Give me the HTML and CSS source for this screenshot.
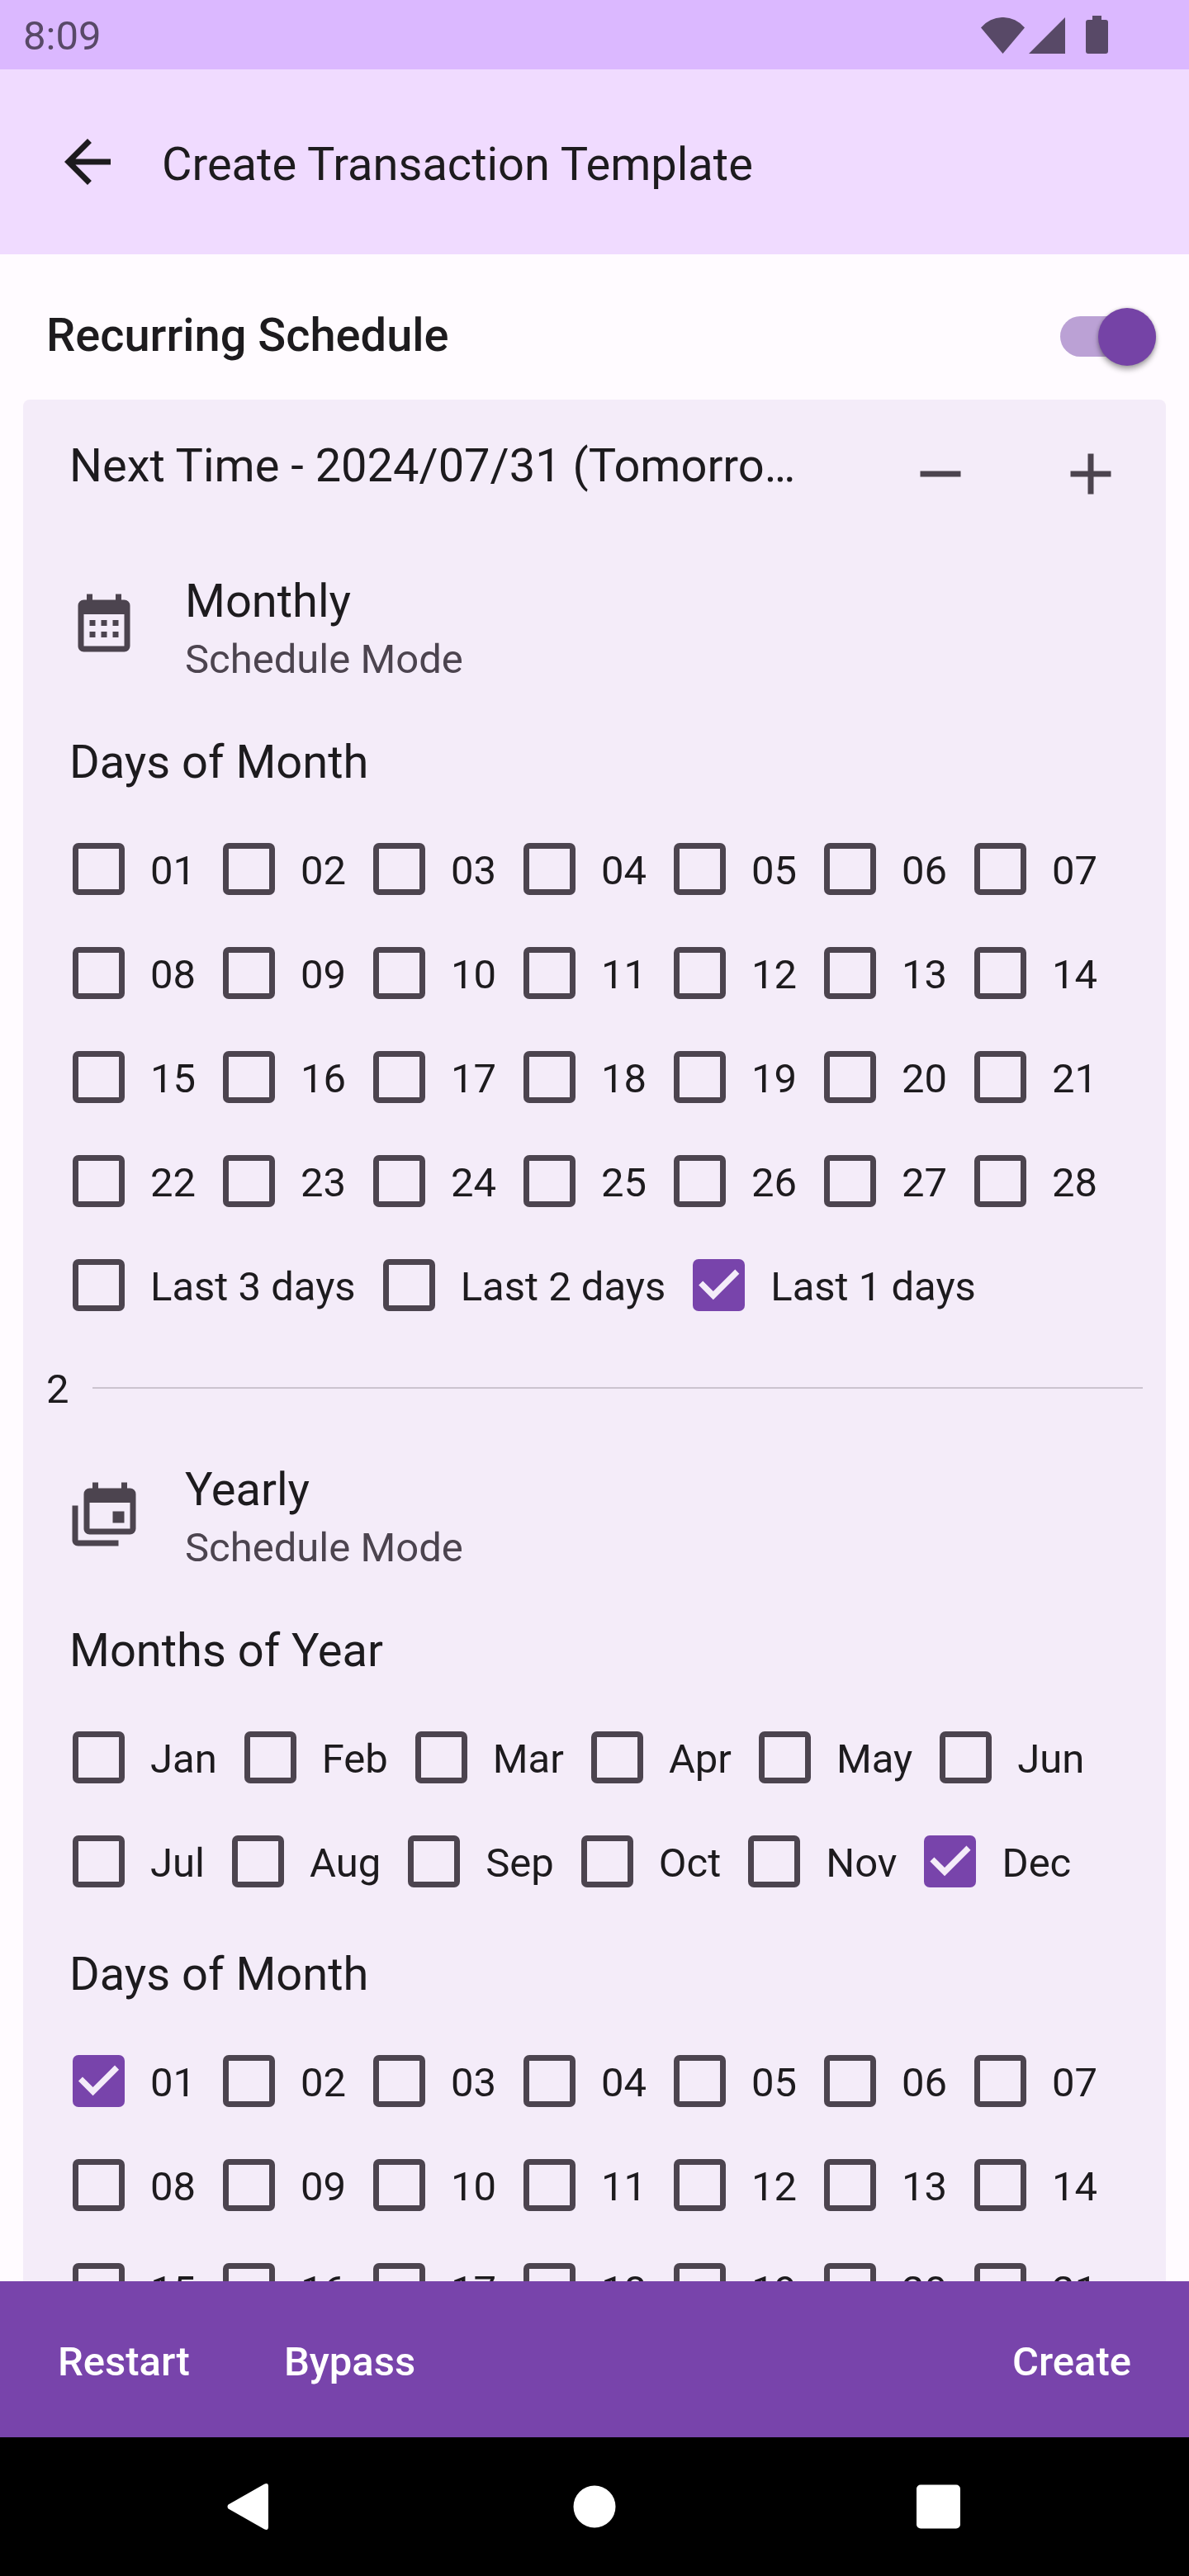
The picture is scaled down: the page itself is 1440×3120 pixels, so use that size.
FILE: index.html
```html
<!DOCTYPE html>
<html lang="en">
<head>
<meta charset="utf-8">
<meta name="viewport" content="width=device-width, initial-scale=1">
<title>Create Transaction Template</title>
<link rel="stylesheet" href="styles.css">
</head>
<body>
<div class="status-bar">
  <time class="clock">8:09</time>
  <div class="status-icons">
    <svg class="icon-wifi" viewBox="0 0 53 44" aria-hidden="true"><path d="M26.5 44 0 12.5A34.3 34.3 0 0 1 53 12.5Z"/></svg>
    <svg class="icon-signal" viewBox="0 0 44 44" aria-hidden="true"><path d="M0 44 44 0V44Z"/></svg>
    <svg class="icon-battery" viewBox="0 0 27 46" aria-hidden="true"><path d="M8 0H19V5H24A3 3 0 0 1 27 8V43A3 3 0 0 1 24 46H3A3 3 0 0 1 0 43V8A3 3 0 0 1 3 5H8Z"/></svg>
  </div>
</div>
<header class="app-bar">
  <button class="icon-button" type="button" aria-label="Back">
    <svg class="icon" viewBox="0 0 24 24" aria-hidden="true"><path d="M20 11H7.83l5.59-5.59L12 4l-8 8 8 8 1.41-1.41L7.83 13H20v-2z"/></svg>
  </button>
  <h1 class="title">Create Transaction Template</h1>
</header>
<main class="content">
  <div class="recurring">
    <label class="recurring-label" for="recurring">Recurring Schedule</label>
    <input class="switch" id="recurring" type="checkbox" role="switch" checked>
  </div>
  <section class="card">
    <div class="next">
      <p class="next-text">Next Time - 2024/07/31 (Tomorrow)</p>
      <div class="stepper">
        <button class="step-button" type="button" aria-label="Fewer"><svg class="icon" viewBox="0 0 24 24" aria-hidden="true"><path d="M19 13H5v-2h14z"/></svg></button>
        <button class="step-button" type="button" aria-label="More"><svg class="icon" viewBox="0 0 24 24" aria-hidden="true"><path d="M19 13h-6v6h-2v-6H5v-2h6V5h2v6h6z"/></svg></button>
      </div>
    </div>

    <div class="mode">
      <svg class="icon mode-icon" viewBox="0 0 24 24" aria-hidden="true"><path d="M9,10V12H7V10H9M13,10V12H11V10H13M17,10V12H15V10H17M19,3A2,2 0 0,1 21,5V19A2,2 0 0,1 19,21H5C3.89,21 3,20.1 3,19V5A2,2 0 0,1 5,3H6V1H8V3H16V1H18V3H19M19,19V8H5V19H19M9,14V16H7V14H9M13,14V16H11V14H13M17,14V16H15V14H17Z"/></svg>
      <div>
        <p class="mode-name">Monthly</p>
        <p class="mode-hint">Schedule Mode</p>
      </div>
    </div>
    <h2 class="group-title">Days of Month</h2>
    <div class="options">
      <div class="days">
        <label class="option"><input type="checkbox"><span>01</span></label>
        <label class="option"><input type="checkbox"><span>02</span></label>
        <label class="option"><input type="checkbox"><span>03</span></label>
        <label class="option"><input type="checkbox"><span>04</span></label>
        <label class="option"><input type="checkbox"><span>05</span></label>
        <label class="option"><input type="checkbox"><span>06</span></label>
        <label class="option"><input type="checkbox"><span>07</span></label>
        <label class="option"><input type="checkbox"><span>08</span></label>
        <label class="option"><input type="checkbox"><span>09</span></label>
        <label class="option"><input type="checkbox"><span>10</span></label>
        <label class="option"><input type="checkbox"><span>11</span></label>
        <label class="option"><input type="checkbox"><span>12</span></label>
        <label class="option"><input type="checkbox"><span>13</span></label>
        <label class="option"><input type="checkbox"><span>14</span></label>
        <label class="option"><input type="checkbox"><span>15</span></label>
        <label class="option"><input type="checkbox"><span>16</span></label>
        <label class="option"><input type="checkbox"><span>17</span></label>
        <label class="option"><input type="checkbox"><span>18</span></label>
        <label class="option"><input type="checkbox"><span>19</span></label>
        <label class="option"><input type="checkbox"><span>20</span></label>
        <label class="option"><input type="checkbox"><span>21</span></label>
        <label class="option"><input type="checkbox"><span>22</span></label>
        <label class="option"><input type="checkbox"><span>23</span></label>
        <label class="option"><input type="checkbox"><span>24</span></label>
        <label class="option"><input type="checkbox"><span>25</span></label>
        <label class="option"><input type="checkbox"><span>26</span></label>
        <label class="option"><input type="checkbox"><span>27</span></label>
        <label class="option"><input type="checkbox"><span>28</span></label>
      </div>
      <div class="wrap">
        <label class="option"><input type="checkbox"><span>Last 3 days</span></label>
        <label class="option"><input type="checkbox"><span>Last 2 days</span></label>
        <label class="option"><input type="checkbox" checked><span>Last 1 days</span></label>
      </div>
    </div>

    <div class="divider"><span>2</span><hr class="rule"></div>

    <div class="mode">
      <svg class="icon mode-icon" viewBox="0 0 24 24" aria-hidden="true"><path d="M21,17V8H7V17H21M21,3A2,2 0 0,1 23,5V17A2,2 0 0,1 21,19H7C5.89,19 5,18.1 5,17V5A2,2 0 0,1 7,3H8V1H10V3H18V1H20V3H21M3,21H17V23H3C1.89,23 1,22.1 1,21V9H3V21M19,15H15V11H19V15Z"/></svg>
      <div>
        <p class="mode-name">Yearly</p>
        <p class="mode-hint">Schedule Mode</p>
      </div>
    </div>
    <h2 class="group-title">Months of Year</h2>
    <div class="options">
      <div class="wrap">
        <label class="option"><input type="checkbox"><span>Jan</span></label>
        <label class="option"><input type="checkbox"><span>Feb</span></label>
        <label class="option"><input type="checkbox"><span>Mar</span></label>
        <label class="option"><input type="checkbox"><span>Apr</span></label>
        <label class="option"><input type="checkbox"><span>May</span></label>
        <label class="option"><input type="checkbox"><span>Jun</span></label>
        <label class="option"><input type="checkbox"><span>Jul</span></label>
        <label class="option"><input type="checkbox"><span>Aug</span></label>
        <label class="option"><input type="checkbox"><span>Sep</span></label>
        <label class="option"><input type="checkbox"><span>Oct</span></label>
        <label class="option"><input type="checkbox"><span>Nov</span></label>
        <label class="option"><input type="checkbox" checked><span>Dec</span></label>
      </div>
    </div>
    <h2 class="group-title group-title-next">Days of Month</h2>
    <div class="options">
      <div class="days">
        <label class="option"><input type="checkbox" checked><span>01</span></label>
        <label class="option"><input type="checkbox"><span>02</span></label>
        <label class="option"><input type="checkbox"><span>03</span></label>
        <label class="option"><input type="checkbox"><span>04</span></label>
        <label class="option"><input type="checkbox"><span>05</span></label>
        <label class="option"><input type="checkbox"><span>06</span></label>
        <label class="option"><input type="checkbox"><span>07</span></label>
        <label class="option"><input type="checkbox"><span>08</span></label>
        <label class="option"><input type="checkbox"><span>09</span></label>
        <label class="option"><input type="checkbox"><span>10</span></label>
        <label class="option"><input type="checkbox"><span>11</span></label>
        <label class="option"><input type="checkbox"><span>12</span></label>
        <label class="option"><input type="checkbox"><span>13</span></label>
        <label class="option"><input type="checkbox"><span>14</span></label>
        <label class="option"><input type="checkbox"><span>15</span></label>
        <label class="option"><input type="checkbox"><span>16</span></label>
        <label class="option"><input type="checkbox"><span>17</span></label>
        <label class="option"><input type="checkbox"><span>18</span></label>
        <label class="option"><input type="checkbox"><span>19</span></label>
        <label class="option"><input type="checkbox"><span>20</span></label>
        <label class="option"><input type="checkbox"><span>21</span></label>
      </div>
    </div>
  </section>
</main>
<footer class="actions">
  <button class="action" type="button">Restart</button>
  <button class="action" type="button">Bypass</button>
  <button class="action action-end" type="button">Create</button>
</footer>
<nav class="system-nav">
  <button class="nav-button" type="button" aria-label="System back"><svg class="nav-icon" viewBox="0 0 60 60" aria-hidden="true"><path d="M3.500 27.500 47 2.800Q52 .5 52 5.500V54.500Q52 59.500 47 57.200L3.500 32.500Q1.500 30 3.500 27.500Z"/></svg></button>
  <button class="nav-button" type="button" aria-label="Home"><svg class="nav-icon" viewBox="0 0 60 60" aria-hidden="true"><circle cx="30" cy="30" r="25.500"/></svg></button>
  <button class="nav-button" type="button" aria-label="Overview"><svg class="nav-icon" viewBox="0 0 60 60" aria-hidden="true"><rect x="3" y="3.500" width="53" height="53" rx="5"/></svg></button>
</nav>
</body>
</html>
```
FILE: styles.css
```css
:root {
  --primary: #7844ab;
  --ink: #1d1b1e;
  --muted: #4c444f;
  --surface: #fffbff;
  --card: #f4ecf9;
  --large: 56px;
  --medium: 49px;
}

* {
  box-sizing: border-box;
}

body {
  display: flex;
  flex-direction: column;
  height: 100vh;
  margin: 0;
  background: var(--surface);
  color: var(--ink);
  font-family: Roboto, "Liberation Sans", sans-serif;
  font-size: var(--medium);
}

h1, h2, p {
  margin: 0;
  font-size: var(--large);
  font-weight: 400;
  line-height: 72px;
}

button {
  padding: 0;
  border: 0;
  background: none;
  color: inherit;
  font: inherit;
}

.icon {
  display: block;
  flex: none;
  width: 84px;
  height: 84px;
  fill: currentColor;
}

.status-bar {
  display: flex;
  flex: none;
  align-items: center;
  justify-content: space-between;
  height: 84px;
  padding: 3px 98px 0 28px;
  background: #dbb8ff;
  color: #584967;
}

.status-icons {
  display: flex;
  align-items: flex-end;
  gap: 5px;
  padding-bottom: 4px;
}

.status-icons svg {
  display: block;
  fill: currentColor;
}

.icon-wifi {
  width: 53px;
  height: 44px;
}

.icon-signal {
  width: 44px;
  height: 44px;
}

.icon-battery {
  width: 27px;
  height: 46px;
  margin-left: 20px;
}

.app-bar {
  display: flex;
  flex: none;
  align-items: center;
  gap: 48px;
  height: 224px;
  padding: 0 64px;
  background: #f0dbff;
}

.title {
  padding-top: 6px;
}

.content {
  flex: 1;
  min-height: 0;
  overflow-y: auto;
  scrollbar-width: none;
}

.recurring {
  display: flex;
  align-items: flex-start;
  justify-content: space-between;
  padding: 65px 40px 41px 56px;
}

.recurring-label {
  font-size: var(--large);
  font-weight: 500;
  line-height: 66px;
}

.switch {
  display: grid;
  align-content: center;
  justify-content: end;
  width: 116px;
  height: 49px;
  margin: 10px 0 11px;
  border-radius: 25px;
  background: #bba1d5;
  appearance: none;
}

.switch::before {
  content: "";
  width: 70px;
  height: 70px;
  border-radius: 50%;
  background: #7543a6;
  box-shadow: 0 5px 6px rgb(0 0 0 / 30%), 0 0 4px rgb(0 0 0 / 20%);
}

.card {
  margin: 0 28px;
  padding-top: 6px;
  border-radius: 8px 8px 0 0;
  background: var(--card);
}

.next {
  display: flex;
  align-items: flex-start;
  gap: 76px;
  padding: 0 7px 0 56px;
}

.next-text {
  flex: 1;
  min-width: 0;
  margin-top: 38px;
  overflow: hidden;
  text-overflow: ellipsis;
  white-space: nowrap;
}

.stepper {
  display: flex;
  gap: 14px;
  color: var(--muted);
}

.step-button {
  display: grid;
  place-content: center;
  width: 168px;
  height: 168px;
}

.mode {
  display: flex;
  gap: 56px;
  margin-top: 34px;
  padding: 0 56px;
}

.mode-icon {
  margin-top: 24px;
  color: var(--muted);
}

.mode-hint {
  color: var(--muted);
  font-size: var(--medium);
  line-height: 70px;
}

.group-title {
  margin-top: 53px;
  padding: 0 56px;
}

.group-title-next {
  margin-top: 37px;
}

.options {
  margin-top: 31px;
  padding: 0 50px 0 60px;
}

.days {
  display: grid;
  grid-template-columns: repeat(7, 1fr);
}

.wrap {
  display: flex;
  flex-wrap: wrap;
  column-gap: 33px;
}

.option {
  display: flex;
  align-items: flex-start;
  gap: 31px;
  height: 126px;
  line-height: 130px;
}

.option input {
  flex: none;
  width: 63px;
  height: 63px;
  margin: 31px 0 0;
  border: 7px solid var(--muted);
  border-radius: 7px;
  appearance: none;
}

.option input:checked {
  border: 0;
  background: var(--primary);
}

.option input:checked::before {
  content: "";
  display: block;
  height: 100%;
  background: var(--card);
  clip-path: polygon(39% 78%, 11% 50%, 19% 42%, 39% 62%, 81% 20%, 89% 28%);
}

.divider {
  display: flex;
  align-items: center;
  gap: 28px;
  margin: 29px 28px 51px;
  line-height: 68px;
}

.rule {
  flex: 1;
  height: 2px;
  margin: 0 0 4px;
  border: 0;
  background: #cbc3cf;
}

.divider + .mode {
  margin-top: 0;
}

.actions {
  display: flex;
  flex: none;
  gap: 30px;
  height: 189px;
  padding: 5px 28px 0;
  background: var(--primary);
  color: #fff;
}

.action {
  padding: 0 42px;
  font-weight: 500;
}

.action-end {
  margin-left: auto;
}

.system-nav {
  display: grid;
  flex: none;
  grid-template-columns: repeat(3, 1fr);
  height: 168px;
  padding: 0 95px;
  background: #000;
}

.nav-button {
  display: grid;
  place-content: center;
}

.nav-icon {
  display: block;
  width: 60px;
  height: 60px;
  fill: #fff;
}
```
